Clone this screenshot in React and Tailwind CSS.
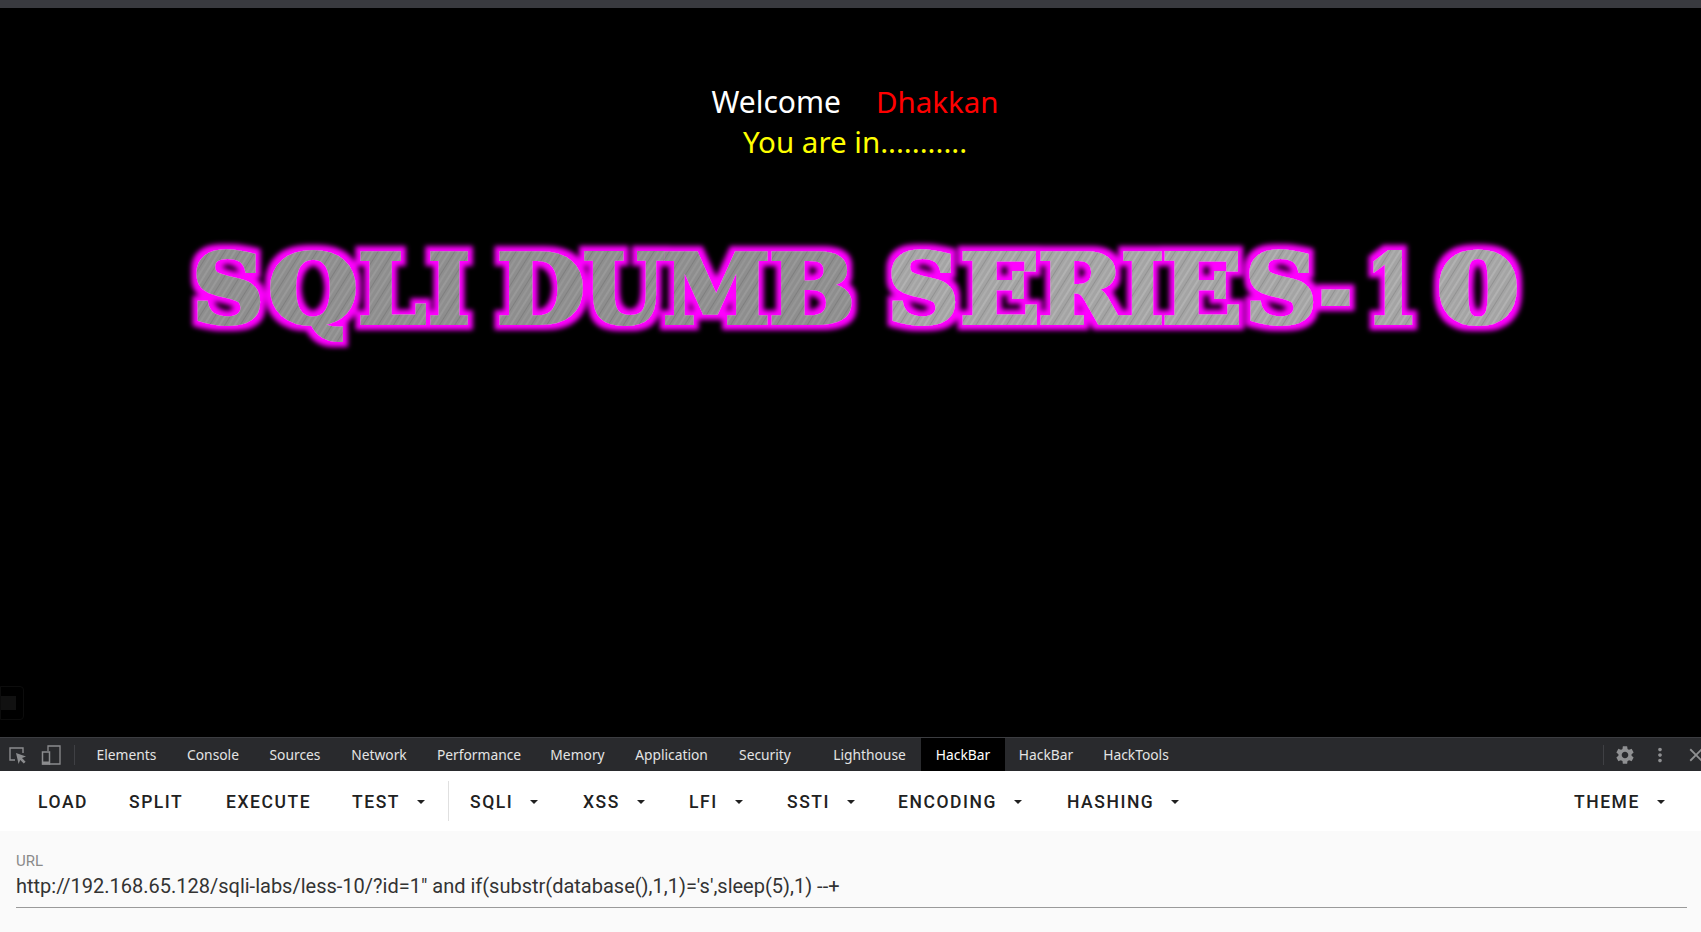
import React from 'react';
import { MdSettings, MdMoreVert, MdClose } from 'react-icons/md';

const tabs = [
  { label: 'Elements', w: 'w-[89px]' },
  { label: 'Console', w: 'w-[84px]' },
  { label: 'Sources', w: 'w-[80px]' },
  { label: 'Network', w: 'w-[88px]' },
  { label: 'Performance', w: 'w-[112px]' },
  { label: 'Memory', w: 'w-[85px]' },
  { label: 'Application', w: 'w-[103px]' },
  { label: 'Security', w: 'w-[95px] pr-[11px]' },
  { label: 'Lighthouse', w: 'w-[103px]' },
  { label: 'HackBar', w: 'w-[84px]', active: true },
  { label: 'HackBar', w: 'w-[82px]' },
  { label: 'HackTools', w: 'w-[98px]' },
];

const leftActions = [
  { label: 'LOAD', w: 'w-[91px]' },
  { label: 'SPLIT', w: 'w-[97px]' },
  { label: 'EXECUTE', w: 'w-[126px]' },
  { label: 'TEST', w: 'w-[96px]', menu: true },
];

const rightActions = [
  { label: 'SQLI', w: 'w-[113px]', menu: true },
  { label: 'XSS', w: 'w-[106px]', menu: true },
  { label: 'LFI', w: 'w-[98px]', menu: true },
  { label: 'SSTI', w: 'w-[111px]', menu: true },
  { label: 'ENCODING', w: 'w-[169px]', menu: true },
  { label: 'HASHING', w: 'w-[130px]', menu: true },
];

// banner letters, x and width in px
const letters = [
  ['S', 192, 72], ['Q', 268, 90], ['L', 358, 68], ['I', 428, 42],
  ['D', 497, 88], ['U', 583, 82], ['M', 663, 107], ['B', 769, 86],
  ['S', 887, 72], ['E', 960, 80], ['R', 1038, 86], ['I', 1121, 43], ['E', 1162, 80],
  ['S', 1245, 72], ['-', 1319, 33], ['1', 1366, 52], ['0', 1436, 84],
];

const Banner = () => (
  <svg viewBox="0 0 1701 130" className="block w-[1701px] h-[130px] overflow-visible">
    <defs>
      <pattern id="brushedDark" width="13" height="13" patternUnits="userSpaceOnUse" patternTransform="rotate(-58)">
        <rect width="13" height="13" fill="#8e8e8e" />
        <rect y="1" width="13" height="2" fill="#999999" />
        <rect y="6" width="13" height="1" fill="#7f7f7f" />
        <rect y="9" width="13" height="2" fill="#969696" />
      </pattern>
      <pattern id="brushedLight" width="13" height="13" patternUnits="userSpaceOnUse" patternTransform="rotate(-58)">
        <rect width="13" height="13" fill="#a4a4a4" />
        <rect y="1" width="13" height="2" fill="#b2b2b2" />
        <rect y="6" width="13" height="1" fill="#929292" />
        <rect y="9" width="13" height="2" fill="#adadad" />
      </pattern>
      <filter id="neon" x="-5%" y="-30%" width="110%" height="160%">
        <feMorphology in="SourceAlpha" operator="dilate" radius="5" result="fat" />
        <feGaussianBlur in="fat" stdDeviation="2.4" result="soft" />
        <feFlood floodColor="#ff00ff" />
        <feComposite in2="soft" operator="in" result="glow" />
        <feMerge>
          <feMergeNode in="glow" />
          <feMergeNode in="SourceGraphic" />
        </feMerge>
      </filter>
    </defs>
    <g filter="url(#neon)" fontFamily="'DejaVu Serif', serif" fontWeight="700" fontSize="95" strokeWidth="4" strokeLinejoin="miter">
      {letters.map(([ch, x, w], i) => (
        <text
          key={i}
          x={x}
          y="92"
          textLength={w}
          lengthAdjust="spacingAndGlyphs"
          fill={i < 8 ? 'url(#brushedDark)' : 'url(#brushedLight)'}
          stroke={i < 8 ? 'url(#brushedDark)' : 'url(#brushedLight)'}
        >
          {ch}
        </text>
      ))}
    </g>
  </svg>
);

const ToolButton = ({ label, w, menu }) => (
  <button className={`${w} h-[42px] pt-[2px] flex items-center shrink-0 font-['Roboto',sans-serif] font-medium text-[17.5px] tracking-[1.55px] text-[#212121]`}>
    <span>{label}</span>
    {menu && <span className="ml-[17px] w-0 h-0 border-x-[4px] border-x-transparent border-t-[4px] border-t-[#212121]" />}
  </button>
);

export default function App() {
  return (
    <div className="w-[1701px] h-[932px] flex flex-col overflow-hidden bg-black">
      <div className="h-2 bg-[#393a3f] shrink-0" />

      <main className="relative flex-1 bg-black">
        <div className="pt-[74px] pl-[9px] text-center font-['Noto_Sans',sans-serif] text-[29.5px] leading-[40px]">
          <div>
            <span className="text-[30px] text-white">Welcome</span>
            <span className="ml-[35px] text-[#ff0000]">Dhakkan</span>
          </div>
          <div className="text-[#ffff00]">You are in...........</div>
        </div>
        <div className="mt-[69px]">
          <Banner />
        </div>
        <div className="absolute left-0 bottom-[17px] w-[24px] h-[34px] border border-[#0c0c0c] rounded-r-[4px] flex items-center">
          <div className="w-[15px] h-[14px] bg-[#111111]" />
        </div>
      </main>

      <div className="h-[34px] shrink-0 flex items-center bg-[#292a2d] border-t border-[#3c3d41] font-['Noto_Sans',sans-serif] text-[13.8px] text-[#e4e4e4]">
        <svg width="20" height="20" viewBox="0 0 20 20" fill="none" className="ml-[7px] shrink-0 text-[#8b8c8e]">
          <path d="M8 15H3V3h13v5" stroke="currentColor" strokeWidth="1.4" />
          <path d="M9 8l10 3.5-4 1.6 3.6 3.6-1.8 1.8-3.6-3.6-1.6 4z" fill="currentColor" />
        </svg>
        <svg width="20" height="22" viewBox="0 0 20 22" fill="none" className="ml-[14px] shrink-0 text-[#8b8c8e]">
          <path d="M7 7V2h12v18H8" stroke="currentColor" strokeWidth="1.3" />
          <rect x="1.5" y="8" width="7" height="12" stroke="currentColor" strokeWidth="1.5" />
          <rect x="1" y="17.5" width="8" height="3" fill="currentColor" />
        </svg>
        <div className="ml-[13px] mr-[7px] w-px h-[20px] bg-[#3f4044] shrink-0" />
        <nav className="flex h-full items-stretch">
          {tabs.map((t, i) => (
            <div
              key={i}
              className={`${t.w} pt-px flex items-center justify-center shrink-0 ${t.active ? 'bg-black text-white' : ''}`}
            >
              {t.label}
            </div>
          ))}
        </nav>
        <div className="ml-auto w-px h-[20px] bg-[#3f4044] shrink-0" />
        <MdSettings className="ml-[10px] w-[22px] h-[22px] text-[#8f9092] shrink-0" />
        <MdMoreVert className="ml-[13px] w-[22px] h-[22px] text-[#8f9092] shrink-0" />
        <MdClose className="ml-[14px] mr-[-6px] w-[22px] h-[22px] text-[#8f9092] shrink-0" />
      </div>

      <div className="h-[60px] shrink-0 bg-white flex items-center pl-[38px] pr-[33px]">
        {leftActions.map((a) => <ToolButton key={a.label} {...a} />)}
        <div className="w-px h-[40px] bg-[#e0e0e0] shrink-0" />
        <div className="flex pl-[21px]">
          {rightActions.map((a) => <ToolButton key={a.label} {...a} />)}
        </div>
        <div className="ml-auto">
          <ToolButton label="THEME" w="w-[94px]" menu />
        </div>
      </div>

      <div className="h-[101px] shrink-0 bg-[#fafafa] pl-4 pr-[14px] pt-[21px]">
        <div className="font-['Roboto',sans-serif] text-[15px] leading-[18px] text-[#8a8a8a]">URL</div>
        <div className="h-[38px] border-b border-[#9a9a9a] font-['Roboto',sans-serif] text-[20px] leading-[32px] text-[#333333] whitespace-nowrap">
          http://192.168.65.128/sqli-labs/less-10/?id=1" and if(substr(database(),1,1)='s',sleep(5),1) --+
        </div>
      </div>
    </div>
  );
}
